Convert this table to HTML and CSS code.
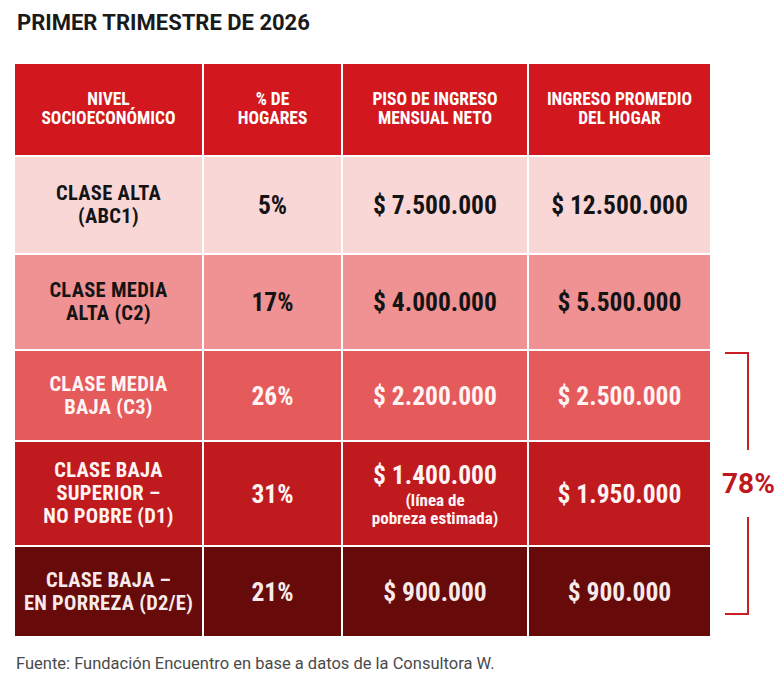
FILE: index.html
```html
<!DOCTYPE html>
<html lang="es">
<head>
<meta charset="utf-8">
<title>Primer trimestre de 2026</title>
<link rel="stylesheet" href="styles.css">
</head>
<body>
<main class="page">
  <h1 class="title">PRIMER TRIMESTRE DE 2026</h1>
  <div class="grid">
    <div class="cell head">NIVEL<br>SOCIOECONÓMICO</div>
    <div class="cell head">% DE<br>HOGARES</div>
    <div class="cell head">PISO DE INGRESO<br>MENSUAL NETO</div>
    <div class="cell head">INGRESO PROMEDIO<br>DEL HOGAR</div>
    <div class="spacer"></div>

    <div class="cell label r1">CLASE ALTA<br>(ABC1)</div>
    <div class="cell value r1">5%</div>
    <div class="cell value r1">$ 7.500.000</div>
    <div class="cell value r1">$ 12.500.000</div>
    <div class="spacer"></div>

    <div class="cell label r2">CLASE MEDIA<br>ALTA (C2)</div>
    <div class="cell value r2">17%</div>
    <div class="cell value r2">$ 4.000.000</div>
    <div class="cell value r2">$ 5.500.000</div>
    <div class="spacer"></div>

    <div class="cell label r3">CLASE MEDIA<br>BAJA (C3)</div>
    <div class="cell value r3">26%</div>
    <div class="cell value r3">$ 2.200.000</div>
    <div class="cell value r3">$ 2.500.000</div>

    <div class="bracket">
      <div class="arm arm-top"></div>
      <div class="total">78%</div>
      <div class="arm arm-bottom"></div>
    </div>

    <div class="cell label r4">CLASE BAJA<br>SUPERIOR –<br>NO POBRE (D1)</div>
    <div class="cell value r4">31%</div>
    <div class="cell value r4 stack"><span>$ 1.400.000</span><span class="note">(línea de<br>pobreza estimada)</span></div>
    <div class="cell value r4">$ 1.950.000</div>

    <div class="cell label r5">CLASE BAJA –<br>EN PORREZA (D2/E)</div>
    <div class="cell value r5">21%</div>
    <div class="cell value r5">$ 900.000</div>
    <div class="cell value r5">$ 900.000</div>
  </div>
  <p class="source">Fuente: Fundación Encuentro en base a datos de la Consultora W.</p>
</main>
</body>
</html>
```

FILE: styles.css
```css
html, body {
  margin: 0;
  padding: 0;
  background: #ffffff;
}

.page {
  padding: 0 0 0 15px;
  width: 769px;
  height: 686px;
  overflow: hidden;
  font-family: Roboto, "Liberation Sans", sans-serif;
}

.title {
  margin: 0;
  padding-top: 10px;
  padding-left: 2px;
  height: 64px;
  box-sizing: border-box;
  font-size: 22px;
  line-height: 26px;
  font-weight: 700;
  color: #1a1a1a;
}

.grid {
  display: grid;
  grid-template-columns: 187px 137px 184px 181px 72px;
  grid-template-rows: 91px 96px 94px 89px 103px 89px;
  column-gap: 2px;
  row-gap: 2px;
  font-family: "Roboto Condensed", "Liberation Sans Narrow", "DejaVu Sans Condensed", Roboto, sans-serif;
  font-stretch: condensed;
  font-weight: 700;
}

.cell {
  display: flex;
  align-items: center;
  justify-content: center;
  text-align: center;
}

.head {
  background: #d2171e;
  color: #ffffff;
  font-size: 17.5px;
  line-height: 19.5px;
  padding-bottom: 1px;
}

.label {
  font-size: 20.5px;
  line-height: 23px;
  letter-spacing: 0.3px;
}

.value {
  font-size: 25.5px;
  line-height: 30px;
}

.stack {
  flex-direction: column;
}

.note {
  font-size: 17px;
  line-height: 18.5px;
  margin-top: 1px;
}

.r1 { background: #f9d7d7; color: #141414; }
.r2 { background: #f09293; color: #141414; }
.r3 { background: #e55a5b; color: #fff4f4; }
.r4 { background: #bf1b1f; color: #fff4f4; }
.r5 { background: #660a0a; color: #f7eaea; }

.spacer {
  background: transparent;
}

.bracket {
  grid-column: 5;
  grid-row: 4 / 7;
  display: flex;
  flex-direction: column;
  padding-top: 1px;
  padding-bottom: 21px;
}

.arm {
  flex: 1;
  width: 22px;
  margin-left: 13px;
  border-right: 2.5px solid #c81e24;
}

.arm-top {
  border-top: 2.5px solid #c81e24;
}

.arm-bottom {
  border-bottom: 2.5px solid #c81e24;
}

.total {
  height: 67px;
  display: flex;
  align-items: center;
  justify-content: flex-start;
  padding-left: 10px;
  font-family: Roboto, "Liberation Sans", sans-serif;
  font-stretch: normal;
  font-size: 28px;
  color: #c0171e;
  font-weight: 700;
}

.source {
  margin: 0;
  padding-top: 18px;
  padding-left: 1px;
  font-size: 16.5px;
  line-height: 20px;
  color: #4a4a4a;
}
```
